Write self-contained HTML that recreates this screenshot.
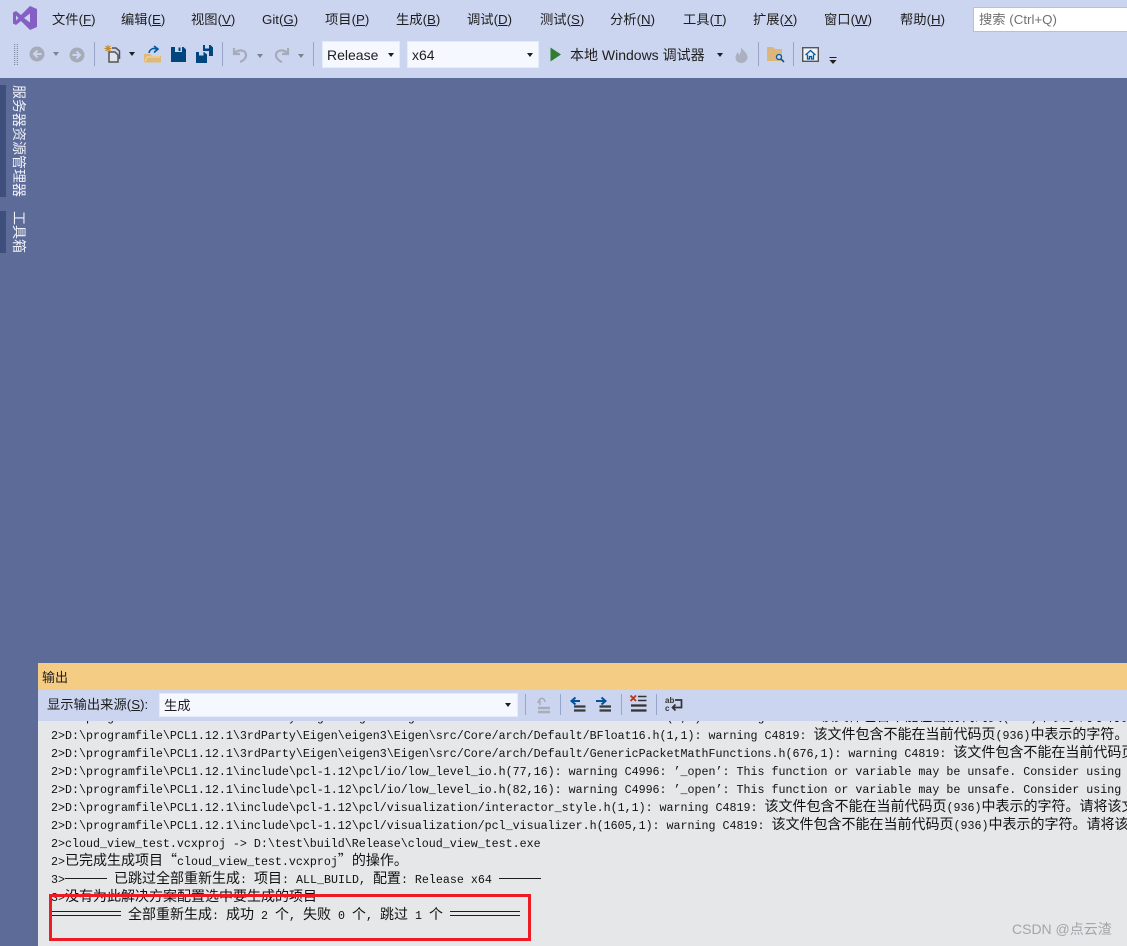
<!DOCTYPE html>
<html lang="zh-CN">
<head>
<meta charset="utf-8">
<title>Visual Studio</title>
<style>
html,body{margin:0;padding:0;width:1127px;height:946px;overflow:hidden;background:#5d6b99}
body{position:relative;font-family:"Liberation Sans","Noto Sans CJK SC",sans-serif;color:#1e1e1e}
#top{position:absolute;left:0;top:0;width:1127px;height:78px;background:#ccd5f0}
.m{position:absolute;top:10px;font-size:13.3px;line-height:20px;white-space:pre;color:#1e1e1e}
.m u{text-underline-offset:1px}
#search{position:absolute;left:973px;top:7px;width:160px;height:23px;background:#fff;border:1px solid #b9c0d6;font-size:13.3px;line-height:23px;color:#717171;padding-left:5px;box-sizing:content-box}
.sep{position:absolute;width:1px;background:#97a5c9}
.combo{position:absolute;background:#f5f8ff;border:1px solid #e6ebfa;box-sizing:border-box;font-size:14px;line-height:24px;padding-left:4px;color:#1e1e1e;white-space:pre}
.arr{position:absolute;width:0;height:0;border-left:3.5px solid transparent;border-right:3.5px solid transparent;border-top:4px solid #1e1e1e}
.arrg{border-top-color:#7d8290}
svg{position:absolute;overflow:visible}
.tab{position:absolute;left:0;width:6px;background:#3f4f7c}
.vt{position:absolute;left:12px;writing-mode:vertical-rl;text-orientation:sideways;font-size:14px;line-height:14px;color:#f0f2fa;white-space:pre}
#panel{position:absolute;left:38px;top:663px;width:1089px;height:283px;background:#e6e7e8;overflow:hidden}
#ptitle{position:absolute;left:0;top:0;width:100%;height:27px;background:#f5cc84;font-size:13px;line-height:29px;padding-left:4px;color:#1e1e1e}
#pbar{position:absolute;left:0;top:27px;width:100%;height:31px;background:#ccd5f0}
#lbl{position:absolute;left:9px;top:0;font-size:13.3px;line-height:30px;white-space:pre;color:#1e1e1e}
#out{position:absolute;left:0;top:58px;width:100%;height:225px;overflow:hidden}
.l{position:absolute;left:13px;height:18px;line-height:18px;font-family:"Liberation Mono","Noto Serif CJK SC",monospace;font-size:11.67px;white-space:pre;color:#111}
.c{font-family:"Noto Sans CJK SC",sans-serif;font-size:14px;line-height:0;color:#111}
.dbl{display:inline-block;width:70px;height:3px;border-top:1px solid #1e1e1e;border-bottom:1px solid #1e1e1e;vertical-align:3px}
.sgl{display:inline-block;width:42px;height:1px;background:#1e1e1e;vertical-align:4px}
#red{position:absolute;left:49px;top:894px;width:482px;height:47px;border:3px solid #ed1c24;box-sizing:border-box}
#wm{position:absolute;left:1012px;top:920px;font-size:14px;line-height:18px;color:#a3a5a8;white-space:pre}
</style>
</head>
<body>
<div id="top">
<svg style="left:13px;top:6px" width="24" height="24" viewBox="0 0 24 24"><path fill="#865fc5" fill-rule="evenodd" d="M17 0 24 3V21L17 24 8 15 3 19 0 17.500V6.500L3 5 8 9ZM17 7.500 11 12 17 16.500ZM3 9.500V14.500L5.500 12Z"/></svg>
<div class="m" style="left:52px">文件(<u>F</u>)</div>
<div class="m" style="left:121px">编辑(<u>E</u>)</div>
<div class="m" style="left:191px">视图(<u>V</u>)</div>
<div class="m" style="left:262px">Git(<u>G</u>)</div>
<div class="m" style="left:325px">项目(<u>P</u>)</div>
<div class="m" style="left:396px">生成(<u>B</u>)</div>
<div class="m" style="left:467px">调试(<u>D</u>)</div>
<div class="m" style="left:540px">测试(<u>S</u>)</div>
<div class="m" style="left:610px">分析(<u>N</u>)</div>
<div class="m" style="left:683px">工具(<u>T</u>)</div>
<div class="m" style="left:753px">扩展(<u>X</u>)</div>
<div class="m" style="left:824px">窗口(<u>W</u>)</div>
<div class="m" style="left:900px">帮助(<u>H</u>)</div>
<div id="search">搜索 (Ctrl+Q)</div>

<svg style="left:13px;top:44px" width="6" height="22"><path stroke="#7f88a3" stroke-dasharray="1 1" d="M1.500 0V22M4.500 0V22"/><path stroke="#aeb6cc" stroke-dasharray="1 1" d="M3 0V22"/></svg>
<svg style="left:29px;top:46px" width="16" height="16" viewBox="0 0 16 16"><circle cx="8" cy="8" r="7.500" fill="#a6abb8"/><path d="M12.500 8H5M8.500 4.500 5 8 8.500 11.500" fill="none" stroke="#ccd5f0" stroke-width="2"/></svg>
<div class="arr arrg" style="left:53px;top:52px"></div>
<svg style="left:69px;top:47px" width="16" height="16" viewBox="0 0 16 16"><circle cx="8" cy="8" r="7.500" fill="#a6abb8"/><path d="M3.500 8H11M7.500 4.500 11 8 7.500 11.500" fill="none" stroke="#ccd5f0" stroke-width="2"/></svg>
<div class="sep" style="left:94px;top:42px;height:24px"></div>
<svg style="left:104px;top:45px" width="18" height="18" viewBox="0 0 18 18"><path d="M5 7H11L14 10V17H5Z" fill="#dfe3ee" stroke="#555" stroke-width="1.500"/><path d="M8 3H12L15.500 6V14" fill="none" stroke="#555" stroke-width="1.500"/><path d="M4 0V7M0.500 3.500H7.500M1.500 1 6.500 6M6.500 1 1.500 6" stroke="#c98a1e" stroke-width="1.100"/></svg>
<div class="arr" style="left:129px;top:52px"></div>
<svg style="left:144px;top:46px" width="18" height="18" viewBox="0 0 18 18"><path d="M0 8H6L8 10H17V16.500H0Z" fill="#e0b878"/><path d="M1 15.500 3 11H16" fill="none" stroke="#f2dcb0"/><path d="M5 7C6 2.500 10 1.500 13 3.500" fill="none" stroke="#005a9e" stroke-width="1.600"/><path d="M10 0 14 3 10 6.500" fill="none" stroke="#005a9e" stroke-width="1.600"/></svg>
<svg style="left:171px;top:47px" width="15" height="15" viewBox="0 0 15 15"><path fill="#00457e" d="M0 0H12.500L15 2.500V15H0Z"/><path fill="#ccd5f0" d="M4 0H11V5H4Z"/><path fill="#00457e" d="M7.500 0.500H9.500V4H7.500Z"/></svg>
<svg style="left:196px;top:45px" width="17" height="18" viewBox="0 0 17 18"><path fill="#00457e" d="M7 0H14.500L17 2.500V11H13V6H7ZM0 7H8L11 9.500V18H0Z"/><path fill="#ccd5f0" d="M9 0H13V3.500H9ZM3 7H7.500V10.500H3Z"/></svg>
<div class="sep" style="left:222px;top:42px;height:24px"></div>
<svg style="left:232px;top:46px" width="16" height="17" viewBox="0 0 16 17"><path d="M2 2V8H8M2.500 7.500C6 3 13 3.500 14 8.500 14.500 12 11 15 8 16" fill="none" stroke="#a5aab8" stroke-width="2.200"/></svg>
<div class="arr arrg" style="left:257px;top:54px"></div>
<svg style="left:274px;top:46px" width="16" height="17" viewBox="0 0 16 17"><path d="M14 2V8H8M13.500 7.500C10 3 3 3.500 2 8.500 1.500 12 5 15 8 16" fill="none" stroke="#a5aab8" stroke-width="2.200"/></svg>
<div class="arr arrg" style="left:298px;top:54px"></div>
<div class="sep" style="left:313px;top:42px;height:24px"></div>
<div class="combo" style="left:322px;top:41px;width:78px;height:27px;line-height:27px">Release</div>
<div class="arr" style="left:388px;top:53px"></div>
<div class="combo" style="left:407px;top:41px;width:132px;height:27px;line-height:27px">x64</div>
<div class="arr" style="left:527px;top:53px"></div>
<svg style="left:550px;top:47px" width="12" height="15"><path fill="#2f7d32" d="M0.500 0.500 11 7.500 0.500 14.500Z"/></svg>
<div class="m" style="left:570px;top:45px;font-size:14px">本地 Windows 调试器</div>
<div class="arr" style="left:717px;top:53px"></div>
<svg style="left:735px;top:47px" width="13" height="16" viewBox="0 0 13 16"><path fill="#aab0bf" d="M6 0C7 3 12 5 12.500 10 12.500 14 9 16 6.500 16 3 16 0.500 14 0.500 10.500 0.500 8 2 6.500 3 5L4 8C6 6 6 3 6 0Z"/></svg>
<div class="sep" style="left:758px;top:42px;height:24px"></div>
<svg style="left:767px;top:47px" width="18" height="16" viewBox="0 0 18 16"><path fill="#dcb67a" d="M0 0H6L8 2H15V14H0Z"/><circle cx="12" cy="10" r="2.500" fill="#ccd5f0" stroke="#005a9e" stroke-width="1.300"/><path d="M14 12 17 15" stroke="#005a9e" stroke-width="1.600"/></svg>
<div class="sep" style="left:793px;top:42px;height:24px"></div>
<svg style="left:802px;top:47px" width="17" height="15" viewBox="0 0 17 15"><rect x="0.700" y="0.700" width="15.600" height="13.600" fill="#eef1f8" stroke="#555" stroke-width="1.400"/><path d="M3.500 8 8.500 3.500 13.500 8M5.500 7.500V12H7.500V9.500H9.500V12H11.500V7.500" fill="none" stroke="#005a9e" stroke-width="1.300"/></svg>
<svg style="left:829px;top:57px" width="8" height="8"><path d="M0.500 0.500H7.500" stroke="#1e1e1e"/><path d="M0.500 3H7.500L4 7Z" fill="#1e1e1e"/></svg>
</div>

<div class="tab" style="top:85px;height:112px"></div>
<div class="tab" style="top:211px;height:42px"></div>
<div class="vt" style="top:85px">服务器资源管理器</div>
<div class="vt" style="top:211px">工具箱</div>

<div id="panel">
<div id="ptitle">输出</div>
<div id="pbar">
<div id="lbl">显示输出来源(<u>S</u>):</div>
<div class="combo" style="left:121px;top:3px;width:359px;height:24px;line-height:23px;font-size:13.3px">生成</div>
<div class="arr" style="left:467px;top:13px"></div>
<div class="sep" style="left:487px;top:4px;height:21px"></div>
<svg style="left:496px;top:6px" width="18" height="18" viewBox="0 0 18 18"><path d="M6 9V4.500M3.500 7 6 3C8 1.500 11 3 11 6" fill="none" stroke="#a8adb9" stroke-width="1.600"/><path d="M4 12H16M4 16H16" stroke="#a8adb9" stroke-width="2.500"/></svg>
<div class="sep" style="left:522px;top:4px;height:21px"></div>
<svg style="left:532px;top:6px" width="16" height="17" viewBox="0 0 16 17"><path d="M10 5H2M5.500 1.500 1.500 5 5.500 8.500" fill="none" stroke="#00539c" stroke-width="2"/><path d="M4 10.500H15.500M4 14.500H15.500" stroke="#3a3a3a" stroke-width="2.200"/></svg>
<svg style="left:558px;top:6px" width="16" height="17" viewBox="0 0 16 17"><path d="M0 5H9M5.500 1.500 9.500 5 5.500 8.500" fill="none" stroke="#00539c" stroke-width="2"/><path d="M3.500 10.500H15M3.500 14.500H15" stroke="#3a3a3a" stroke-width="2.200"/></svg>
<div class="sep" style="left:583px;top:4px;height:21px"></div>
<svg style="left:592px;top:5px" width="17" height="18" viewBox="0 0 17 18"><path d="M0.500 0.500 6 6M6 0.500 0.500 6" stroke="#b5381c" stroke-width="1.800"/><path d="M8 1.500H16.500M8 5.500H16.500" stroke="#333" stroke-width="1.600"/><path d="M1 10.500H16.500M1 15.500H16.500" stroke="#333" stroke-width="2.200"/></svg>
<div class="sep" style="left:618px;top:4px;height:21px"></div>
<svg style="left:627px;top:6px" width="18" height="17" viewBox="0 0 18 17"><text x="0" y="7" font-family="Liberation Sans" font-size="8" font-weight="bold" fill="#333">ab</text><text x="0" y="15" font-family="Liberation Sans" font-size="8" font-weight="bold" fill="#333">c</text><path d="M10 4H16.500V11.500H8M10.500 8.500 7.500 11.500 10.500 14.500" fill="none" stroke="#333" stroke-width="1.700"/></svg>
</div>
<div id="out">
<div class="l" style="top:-12px">2&gt;D:\programfile\PCL1.12.1\3rdParty\Eigen\eigen3\Eigen\src/Core/arch/AVX512/PacketMath.h(1,1): warning C4819: <span class="c">该文件包含不能在当前代码页</span>(936)<span class="c">中表示的字符。请将该文件</span></div>
<div class="l" style="top:6px">2&gt;D:\programfile\PCL1.12.1\3rdParty\Eigen\eigen3\Eigen\src/Core/arch/Default/BFloat16.h(1,1): warning C4819: <span class="c">该文件包含不能在当前代码页</span>(936)<span class="c">中表示的字符。请将该文件</span></div>
<div class="l" style="top:24px">2&gt;D:\programfile\PCL1.12.1\3rdParty\Eigen\eigen3\Eigen\src/Core/arch/Default/GenericPacketMathFunctions.h(676,1): warning C4819: <span class="c">该文件包含不能在当前代码页</span></div>
<div class="l" style="top:42px">2&gt;D:\programfile\PCL1.12.1\include\pcl-1.12\pcl/io/low_level_io.h(77,16): warning C4996: ’_open’: This function or variable may be unsafe. Consider using</div>
<div class="l" style="top:60px">2&gt;D:\programfile\PCL1.12.1\include\pcl-1.12\pcl/io/low_level_io.h(82,16): warning C4996: ’_open’: This function or variable may be unsafe. Consider using</div>
<div class="l" style="top:78px">2&gt;D:\programfile\PCL1.12.1\include\pcl-1.12\pcl/visualization/interactor_style.h(1,1): warning C4819: <span class="c">该文件包含不能在当前代码页</span>(936)<span class="c">中表示的字符。请将该文件</span></div>
<div class="l" style="top:96px">2&gt;D:\programfile\PCL1.12.1\include\pcl-1.12\pcl/visualization/pcl_visualizer.h(1605,1): warning C4819: <span class="c">该文件包含不能在当前代码页</span>(936)<span class="c">中表示的字符。请将该文件</span></div>
<div class="l" style="top:114px">2&gt;cloud_view_test.vcxproj -&gt; D:\test\build\Release\cloud_view_test.exe</div>
<div class="l" style="top:132px">2&gt;<span class="c">已完成生成项目“</span>cloud_view_test.vcxproj<span class="c">”的操作。</span></div>
<div class="l" style="top:150px">3&gt;<span class="sgl"></span> <span class="c">已跳过全部重新生成</span>: <span class="c">项目</span>: ALL_BUILD, <span class="c">配置</span>: Release x64 <span class="sgl"></span></div>
<div class="l" style="top:168px">3&gt;<span class="c">没有为此解决方案配置选中要生成的项目</span></div>
<div class="l" style="top:186px"><span class="dbl"></span> <span class="c">全部重新生成</span>: <span class="c">成功</span> 2 <span class="c">个</span>, <span class="c">失败</span> 0 <span class="c">个</span>, <span class="c">跳过</span> 1 <span class="c">个</span> <span class="dbl"></span></div>
</div>
</div>
<div id="red"></div>
<div id="wm">CSDN @点云渣</div>
</body>
</html>
